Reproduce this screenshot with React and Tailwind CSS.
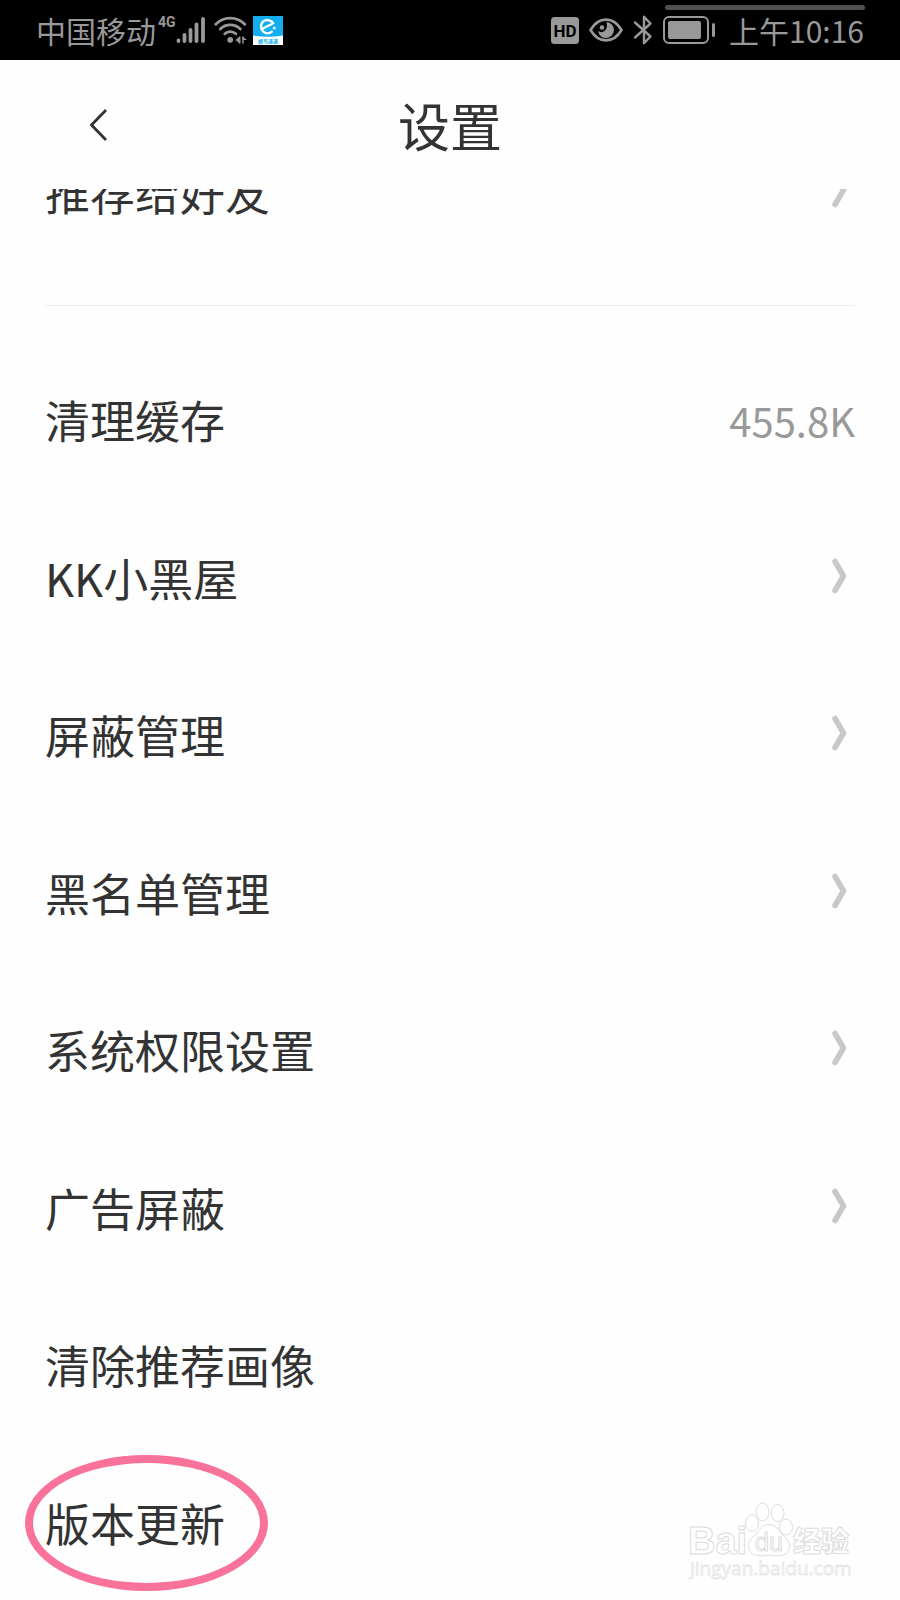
const SETTINGS = [
  { label: "清理缓存", value: "455.8K" },
  { label: "KK小黑屋", arrow: true },
  { label: "屏蔽管理", arrow: true },
  { label: "黑名单管理", arrow: true },
  { label: "系统权限设置", arrow: true },
  { label: "广告屏蔽", arrow: true },
  { label: "清除推荐画像" },
  { label: "版本更新", highlighted: true },
]

function SignalIcon() {
  return (
    <svg width="30" height="28" viewBox="0 0 30 28" stroke="currentColor" strokeWidth="3.800" strokeLinecap="round" aria-hidden="true">
      <path d="M2.5 24.500v0.5M8.5 19v6M14.5 14v11M20.5 8.500v16.500M27 3v22" />
    </svg>
  )
}

function WifiIcon() {
  return (
    <svg width="33" height="28" viewBox="0 0 33 28" fill="none" stroke="currentColor" strokeWidth="2.800" strokeLinecap="round" aria-hidden="true">
      <path d="M1.800 8.200C9.500 0.100 23 0.100 30.800 8.200" />
      <path d="M6.300 13C12 7.600 20.500 7.600 26.300 13" />
      <path d="M10.800 17.800C14 14.800 18.600 14.800 21.800 17.800" />
      <circle cx="16.200" cy="23.800" r="2.900" fill="currentColor" stroke="none" />
      <path d="M21.500 24l4-3.500v7zM28.500 20.500l4.500 3.500h-4.500z" fill="currentColor" stroke="none" />
      <path d="M25.800 21v6M29 21v6" strokeWidth="1.400" />
    </svg>
  )
}

function ElemeIcon() {
  return (
    <svg width="30" height="29" viewBox="0 0 30 29" aria-hidden="true">
      <rect width="30" height="29" fill="#fff" />
      <path d="M0 0h30v19.500Q15 22 0 19.500z" fill="#12aeee" />
      <path
        d="M9.800 12.500l10.500-5.200C17 2.500 10 3.200 8.300 8.500 6.700 15.500 14 19.600 19 15.700"
        fill="none"
        stroke="#fff"
        strokeWidth="2.300"
        strokeLinecap="round"
        strokeLinejoin="round"
      />
      <circle cx="21.300" cy="12" r="1.500" fill="#fff" />
      <text x="15" y="27" textAnchor="middle" fontSize="5" fontWeight="700" fill="#12aeee">
        蜂鸟速递
      </text>
    </svg>
  )
}

function HdIcon() {
  return (
    <svg width="28" height="27" viewBox="0 0 28 27" aria-hidden="true">
      <rect width="28" height="27" rx="3.500" fill="currentColor" />
      <text x="14" y="19.500" textAnchor="middle" fontFamily="Roboto, sans-serif" fontSize="17" fontWeight="700" fill="#000">
        HD
      </text>
    </svg>
  )
}

function EyeIcon() {
  return (
    <svg width="34" height="24" viewBox="0 0 34 24" aria-hidden="true">
      <path
        d="M1.500 12C9.500-1.800 24.500-1.800 32.500 12 24.500 25.800 9.500 25.800 1.500 12z"
        fill="none"
        stroke="currentColor"
        strokeWidth="2.600"
        strokeLinejoin="round"
      />
      <path d="M17.500 4a8 8 0 1 1-8.500 9q4 2.500 7-0.500 3-3.500 1.500-8.500z" fill="currentColor" />
      <circle cx="13" cy="9.500" r="2.300" fill="currentColor" />
    </svg>
  )
}

function BluetoothIcon() {
  return (
    <svg width="20" height="30" viewBox="0 0 20 30" fill="none" stroke="currentColor" strokeWidth="2.400" strokeLinecap="round" strokeLinejoin="round" aria-hidden="true">
      <path d="M2 7.500l15.500 14L11 28.200V1.800l6.500 6.700L2 22.500" />
    </svg>
  )
}

function BatteryIcon() {
  return (
    <svg width="53" height="28" viewBox="0 0 53 28" aria-hidden="true">
      <rect x="1" y="1" width="44" height="26" rx="5" fill="none" stroke="currentColor" strokeWidth="2" />
      <rect x="5" y="5" width="33" height="18" rx="2" fill="currentColor" />
      <rect x="49" y="7" width="3" height="14" rx="1.500" fill="currentColor" />
    </svg>
  )
}

function StatusBar() {
  return (
    <div className="relative h-15 shrink-0 bg-black text-[#999999] pl-9 pr-9 flex items-center justify-between">
      <div className="flex items-center">
        <span className="text-[30px] leading-8">中国移动</span>
        <span className="self-start text-[14px] leading-4 font-bold font-[Roboto,sans-serif] ml-0.5">4G</span>
        <SignalIcon />
        <div className="ml-2 flex items-center gap-1.5">
          <WifiIcon />
          <ElemeIcon />
        </div>
      </div>
      <div className="flex items-center gap-2.5">
        <HdIcon />
        <EyeIcon />
        <BluetoothIcon />
        <BatteryIcon />
        <span className="text-[30px] leading-8 ml-[3px]">上午10:16</span>
      </div>
      <div className="absolute top-[5px] right-[35px] w-[200px] h-[5px] rounded-full bg-[#505050]" />
    </div>
  )
}

function Header() {
  return (
    <header className="h-[129px] shrink-0 px-20 grid grid-cols-[1fr_auto_1fr] items-center">
      <button type="button" aria-label="返回" className="w-10 h-12 flex items-center pl-2">
        <svg width="22" height="34" viewBox="0 0 22 34" fill="none" stroke="currentColor" strokeWidth="2.800" aria-hidden="true">
          <path d="M18 2L3.500 17 18 32" />
        </svg>
      </button>
      <h1 className="text-[52px] leading-16">设置</h1>
    </header>
  )
}

function RowArrow() {
  return (
    <svg className="mr-2 mb-1" width="18" height="36" viewBox="0 0 18 36" fill="none" stroke="#c8c8c8" strokeWidth="5.500" strokeLinecap="round" strokeLinejoin="round" aria-hidden="true">
      <path d="M6 3.500L14.500 18 6 32.500" />
    </svg>
  )
}

function SettingRow({ label, value, arrow, highlighted }) {
  return (
    <button type="button" className="w-full h-16 flex items-center justify-between text-left">
      <span className="relative text-[45px] leading-16">
        {label}
        {highlighted && (
          <span className="absolute -left-5 -right-[43px] -top-9 -bottom-9 rounded-[50%] border-8 border-[#f87299] pointer-events-none" />
        )}
      </span>
      {value && <span className="text-[40px] leading-16 text-[#999999]">{value}</span>}
      {arrow && <RowArrow />}
    </button>
  )
}

function Watermark() {
  return (
    <svg
      className="absolute right-10 bottom-4 pointer-events-none"
      width="172"
      height="84"
      viewBox="0 0 172 84"
      fill="#fff"
      stroke="#dcdcdc"
      strokeWidth="1"
      aria-hidden="true"
    >
      <text x="0" y="54" fontFamily="Liberation Sans, sans-serif" fontSize="38" fontWeight="700">Bai</text>
      <ellipse cx="64" cy="23" rx="6.500" ry="8.300" />
      <ellipse cx="74.500" cy="12" rx="6.300" ry="9" />
      <ellipse cx="89.500" cy="13" rx="6.500" ry="8.500" />
      <ellipse cx="98" cy="27" rx="6.500" ry="8" />
      <path d="M81 24.500c-7 0-9 5.500-13 9.500-5 5-8 8-7 13.500 1 8 8.500 9.500 20 7.500 12 2 19.500 0.500 20.500-7.500 1-5.500-3-8.500-7.500-13.500-4-4-6-9.500-13-9.500z" />
      <text x="67" y="51" fontFamily="Liberation Sans, sans-serif" fontSize="25">du</text>
      <text x="105" y="52" fontSize="28" fontWeight="900">经验</text>
      <text x="2" y="75" fontFamily="Open Sans, sans-serif" fontSize="19" stroke="#e4e4e4" strokeWidth="0.800">
        jingyan.baidu.com
      </text>
    </svg>
  )
}

function App() {
  return (
    <div className="relative min-h-screen flex flex-col overflow-hidden bg-[#fefefe] text-[#333333] font-['Noto_Sans_CJK_SC',sans-serif]">
      <StatusBar />
      <Header />
      <main className="flex-1 flex flex-col overflow-hidden px-[45px]">
        <div className="-mt-[29px]">
          <SettingRow label="推荐给好友" arrow />
        </div>
        <hr className="mt-[81px] border-[#ececec]" />
        <ul className="flex-1 flex flex-col justify-between pt-[82px] pb-[45px]">
          {SETTINGS.map((item) => (
            <li key={item.label}>
              <SettingRow {...item} />
            </li>
          ))}
        </ul>
      </main>
      <Watermark />
    </div>
  )
}

export default App
